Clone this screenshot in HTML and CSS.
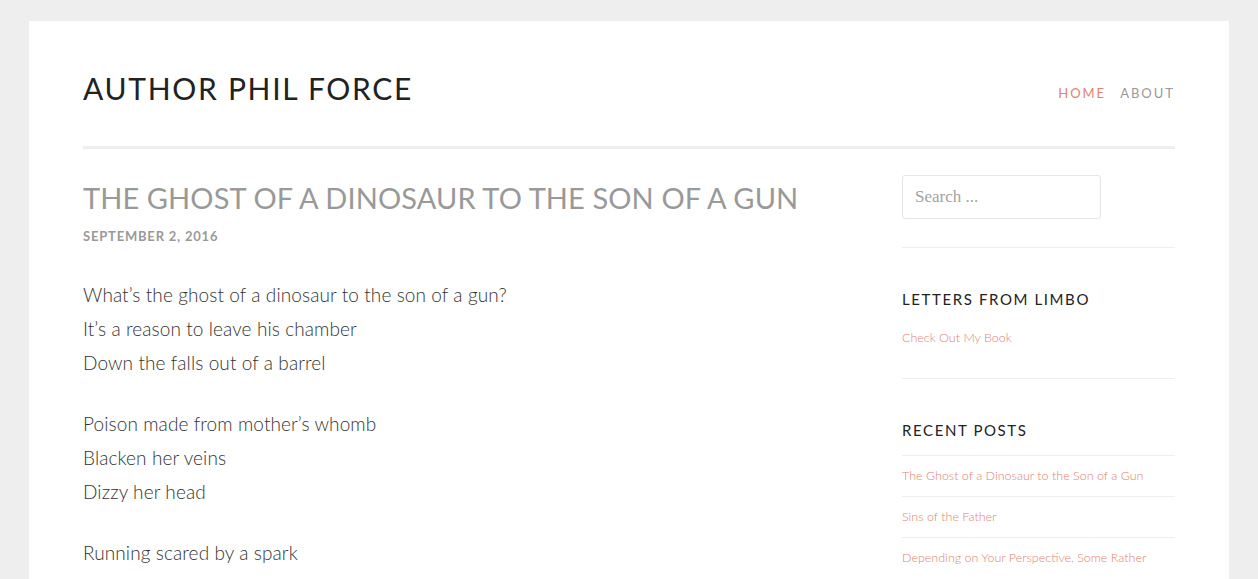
FILE: index.html
```html
<!DOCTYPE html>
<html lang="en">
  <head>
    <meta charset="UTF-8" />
    <meta name="viewport" content="width=device-width, initial-scale=1.0" />
    <title>Author Phil Force</title>
    <link rel="stylesheet" href="styles.css">
  </head>
  <body>
    <div class="page">
      <header class="site-header">
        <h1 class="site-title">Author Phil Force</h1>
        <nav class="main-nav">
          <a href="#" class="current">Home</a>
          <a href="#">About</a>
        </nav>
      </header>

      <div class="content">
        <!-- Post -->
        <article class="post">
          <h2 class="post-title">The Ghost of a Dinosaur to the Son of a Gun</h2>
          <div class="post-date">September 2, 2016</div>

          <div class="post-body">
            <p>What&rsquo;s the ghost of a dinosaur to the son of a gun?<br>
              It&rsquo;s a reason to leave his chamber<br>
              Down the falls out of a barrel</p>
            <p>Poison made from mother&rsquo;s whomb<br>
              Blacken her veins<br>
              Dizzy her head</p>
            <p>Running scared by a spark</p>
          </div>
        </article>

        <!-- Sidebar -->
        <aside class="sidebar">
          <div class="widget widget-search">
            <input type="search" class="search-field" placeholder="Search ...">
          </div>

          <div class="widget">
            <h3 class="widget-title">Letters From Limbo</h3>
            <a href="#" class="widget-link">Check Out My Book</a>
          </div>

          <div class="widget widget-recent">
            <h3 class="widget-title">Recent Posts</h3>
            <ul>
              <li><a href="#">The Ghost of a Dinosaur to the Son of a Gun</a></li>
              <li><a href="#">Sins of the Father</a></li>
              <li><a href="#">Depending on Your Perspective, Some Rather</a></li>
            </ul>
          </div>
        </aside>
      </div>
    </div>
  </body>
</html>
```

FILE: styles.css
```css
body {
  font-family: "Lato", "Open Sans", sans-serif;
  background-color: #eeeeee;
  color: #333;
  margin: 0;
  padding: 21px 0 0;
}

a {
  text-decoration: none;
}

.page {
  background-color: #fff;
  width: 1200px;
  margin: 0 auto;
  padding: 0 54px;
  box-sizing: border-box;
  min-height: 600px;
}

/* header */
.site-header {
  display: flex;
  justify-content: space-between;
  align-items: baseline;
  padding-top: 49px;
  padding-bottom: 40px;
  border-bottom: 3px solid #eeeeee;
}

.site-title {
  margin: 0;
  font-size: 30px;
  font-weight: 400;
  line-height: 36px;
  letter-spacing: 1.7px;
  text-transform: uppercase;
  color: #222;
}

.main-nav {
  display: flex;
  gap: 14px;
  position: relative;
  top: -2px;
}

.main-nav a {
  font-size: 13px;
  letter-spacing: 2px;
  text-transform: uppercase;
  color: #999;
}

.main-nav a.current {
  color: #e2826f;
}

/* columns */
.content {
  display: flex;
  justify-content: space-between;
}

.post {
  width: 780px;
  padding-top: 29px;
}

.post-title {
  margin: 0;
  font-size: 29px;
  font-weight: 400;
  line-height: 40px;
  letter-spacing: 0.1px;
  text-transform: uppercase;
  color: #999;
}

.post-date {
  margin-top: 10px;
  font-size: 13px;
  font-weight: 700;
  letter-spacing: 0.8px;
  text-transform: uppercase;
  color: #999;
}

.post-body {
  padding-top: 34px;
  font-size: 19px;
  font-weight: 300;
  line-height: 34px;
  letter-spacing: 0.1px;
  color: #333;
}

.post-body p {
  margin: 0 0 27px;
}

/* sidebar */
.sidebar {
  width: 273px;
  padding-top: 26px;
}

.widget {
  padding: 42px 0 33px;
  border-bottom: 1px solid #eeeeee;
}

.widget-search {
  padding: 0 0 28px;
}

.search-field {
  display: block;
  width: 199px;
  height: 44px;
  box-sizing: border-box;
  border: 1px solid #e6e6e6;
  border-radius: 3px;
  padding: 0 12px;
  font-family: "Liberation Serif", serif;
  font-size: 17px;
  color: #999;
  outline: none;
}

.search-field::placeholder {
  color: #a3a3a3;
}

.widget-title {
  margin: 0 0 18px;
  font-size: 15px;
  font-weight: 400;
  letter-spacing: 1.6px;
  text-transform: uppercase;
  color: #222;
}

.widget-link,
.widget-recent a {
  font-size: 12.5px;
  font-weight: 300;
  color: #e2826f;
}

.widget-recent {
  padding-top: 42px;
  border-bottom: none;
}

.widget-recent .widget-title {
  margin-bottom: 16px;
}

.widget-recent ul {
  list-style: none;
  margin: 0;
  padding: 0;
}

.widget-recent li {
  border-top: 1px solid #eeeeee;
  padding: 10px 0;
  font-size: 12.5px;
  line-height: 20px;
}
```
